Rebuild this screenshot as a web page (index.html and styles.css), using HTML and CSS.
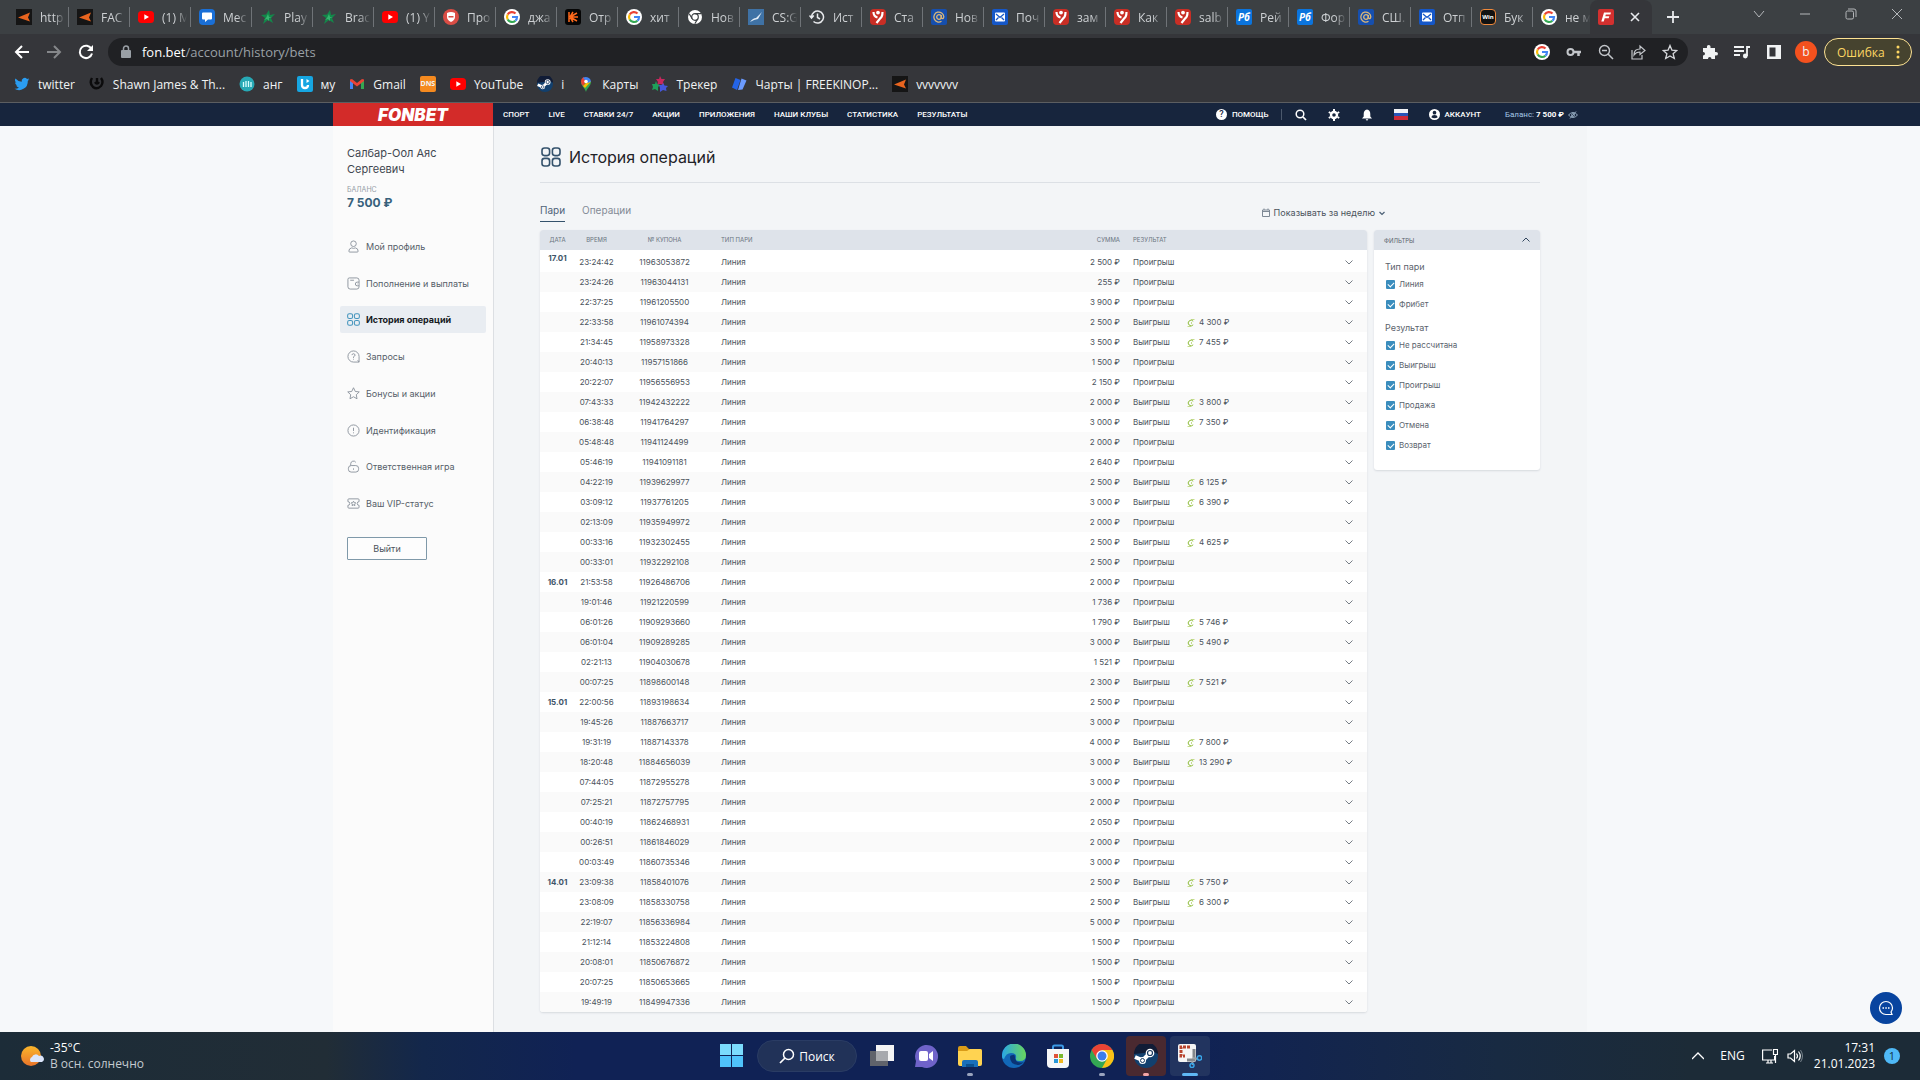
FILE: index.html
```html
<!DOCTYPE html>
<html lang="ru">
<head>
    <meta charset="UTF-8">
    <meta name="viewport" content="width=device-width, initial-scale=1.0">
    <title>История операций</title>
    <link rel="stylesheet" href="styles.css">
</head>
<body>
    <!-- Общие иконки -->
    <svg class="sprite" aria-hidden="true">
        <symbol id="i-aimp" viewBox="0 0 16 16"><rect width="16" height="16" fill="#151515"/><path d="M2 8.500l12-5-2 5 2 4z" fill="#e8641f"/></symbol>
        <symbol id="i-youtube" viewBox="0 0 16 16"><rect y="2" width="16" height="12" rx="3.5" fill="#f00"/><path d="M6.3 5.3v5.4L11 8z" fill="#fff"/></symbol>
        <symbol id="i-message" viewBox="0 0 16 16"><rect width="16" height="16" rx="4" fill="#1a6fd6"/><path d="M3 4.500q0-1 1-1h8q1 0 1 1v5q0 1-1 1H9L6 13v-2.500H4q-1 0-1-1z" fill="#fff"/></symbol>
        <symbol id="i-star5" viewBox="0 0 16 16"><path d="M9 1l1 5 5-1-4 4 2 5-5-3-5 4 2-6-4-3 5-.5z" fill="#13874a"/><path d="M8 5l1 3 3 0-3 1 0 3-2-2-3 1 2-2z" fill="#35b56f"/></symbol>
        <symbol id="i-shield" viewBox="0 0 16 16"><circle cx="8" cy="8" r="8" fill="#da4d45"/><path d="M4 4q4-2 8 0v4q0 3-4 5-4-2-4-5z" fill="#fff"/><path d="M5.500 7h5v1.500h-5z" fill="#da4d45"/></symbol>
        <symbol id="i-google" viewBox="0 0 16 16"><circle cx="8" cy="8" r="8" fill="#fff"/><g fill="none" stroke-width="2.200"><path d="M11.500 4.500A5 5 0 0 0 3.700 5.500" stroke="#ea4335"/><path d="M3.700 5.500a5 5 0 0 0 0 5" stroke="#fbbc05"/><path d="M3.700 10.500a5 5 0 0 0 7.700 1.200" stroke="#34a853"/><path d="M8 8h5q0 2.500-1.600 3.700" stroke="#4285f4"/></g></symbol>
        <symbol id="i-kinopoisk" viewBox="0 0 16 16"><rect width="16" height="16" rx="3" fill="#050505"/><path d="M4 3v10M5 8l3-5M5 8l7-4M5 8h8M5 8l7 4M5 8l3 5" stroke="#ff6a1c" stroke-width="1.500"/></symbol>
        <symbol id="i-chromew" viewBox="0 0 16 16"><circle cx="8" cy="8" r="7" fill="#fff"/><circle cx="8" cy="8" r="3.300" fill="#fff" stroke="#3c4043" stroke-width="1.200"/><path d="M8 4.700h6M5.200 9.700l-3-5M10.800 9.700l-3 5" stroke="#3c4043" stroke-width="1.200"/></symbol>
        <symbol id="i-cs" viewBox="0 0 16 16"><rect width="16" height="16" fill="#3f72a5"/><path d="M2 13q3-4 6-4l6-6-4 7-4 1z" fill="#e2edf7"/></symbol>
        <symbol id="i-history" viewBox="0 0 16 16"><path d="M2.500 8a6 6 0 1 1 2 4.500M.500 6.500L2.500 9l2.300-2.500M8.500 4.500V8.500l2.500 1.500" fill="none" stroke="#e8eaed" stroke-width="1.500"/></symbol>
        <symbol id="i-y" viewBox="0 0 16 16"><rect width="16" height="16" rx="4" fill="#c92e25"/><circle cx="8" cy="3.600" r="1.900" fill="#fff"/><path d="M3.500 3q0 4.500 4 5.500M12.500 3q0 5-2.500 6.500L6.500 14" fill="none" stroke="#fff" stroke-width="2.200"/></symbol>
        <symbol id="i-at" viewBox="0 0 16 16"><rect width="16" height="16" rx="2" fill="#164fae"/><circle cx="8" cy="8" r="2.300" fill="none" stroke="#dcb878" stroke-width="1.300"/><path d="M10.300 6v3q2.500 1.500 2.500-1.500A5 5 0 1 0 10.500 12.300" fill="none" stroke="#dcb878" stroke-width="1.300"/></symbol>
        <symbol id="i-mail" viewBox="0 0 16 16"><rect width="16" height="16" rx="2" fill="#1557c8"/><rect x="3" y="3.500" width="10" height="9" rx="1" fill="#fff"/><path d="M4 5l4 3.500L12 5M4 11l2.500-2.500M12 11L9.500 8.500" fill="none" stroke="#1557c8" stroke-width="1.300"/></symbol>
        <symbol id="i-twitter" viewBox="0 0 24 24"><path d="M23 5c-.800.400-1.700.600-2.600.800.900-.600 1.600-1.500 2-2.500-.900.500-1.900.900-2.900 1.100a4.600 4.600 0 0 0-7.900 4.200A13 13 0 0 1 2.200 3.800a4.600 4.600 0 0 0 1.400 6.100c-.700 0-1.400-.200-2-.600 0 2.300 1.600 4.200 3.700 4.600-.700.200-1.400.200-2.100.100.600 1.800 2.300 3.100 4.300 3.200A9.200 9.200 0 0 1 .700 19 13 13 0 0 0 20.700 7.400C21.600 6.800 22.400 5.900 23 5z" fill="#2a9df1"/></symbol>
        <symbol id="i-mp" viewBox="0 0 16 16"><path d="M3 2q-3 5 1 9 4 3 8-1 3-4 0-8M8 2v6M6 6q2 3 4 0" fill="none" stroke="#0b0b0c" stroke-width="2.400"/></symbol>
        <symbol id="i-ang" viewBox="0 0 16 16"><circle cx="8" cy="8" r="7.500" fill="#27a9b5"/><path d="M4.500 11V6M7 11V5M9.500 11V5M12 11V6" stroke="#d9ffff" stroke-width="1.300"/></symbol>
        <symbol id="i-my" viewBox="0 0 16 16"><rect width="16" height="16" rx="2" fill="#16a6e2"/><path d="M5 3v6q0 3 3 3t3-3" fill="none" stroke="#fff" stroke-width="2.300"/><path d="M9.500 3l3 2-3 2z" fill="#fff"/></symbol>
        <symbol id="i-gmail" viewBox="0 0 16 16"><path d="M1 4v9h3V6z" fill="#4285f4"/><path d="M15 4v9h-3V6z" fill="#34a853"/><path d="M1 3.500L3 3l5 4 5-4 2 .500V5L8 10.500 1 5z" fill="#ea4335"/></symbol>
        <symbol id="i-steam" viewBox="0 0 24 24"><circle cx="12" cy="12" r="12" fill="#12406e"/><path d="M0 10A12 12 0 0 1 24 10L20 8z" fill="#111c36"/><path d="M1 13l7 3" stroke="#fff" stroke-width="4"/><circle cx="8.500" cy="16.500" r="3.500" fill="#fff"/><path d="M9 16l6-6" stroke="#fff" stroke-width="4"/><circle cx="16" cy="9" r="4.300" fill="#fff"/><circle cx="16" cy="9" r="2.500" fill="#fff" stroke="#17385f" stroke-width="1.200"/><circle cx="8.500" cy="16.500" r="2" fill="none" stroke="#17385f"/></symbol>
        <symbol id="i-maps" viewBox="0 0 16 16"><path d="M8 16C7 12 3 10 3 5.500L8 6l5-.500C13 10 9 12 8 16z" fill="#34a853"/><path d="M3 5.500A5 5 0 0 1 6 1l2 5-3 4q-2-2-2-4.500z" fill="#ea4335"/><path d="M5 10l5-5 3 .500-6 6.500z" fill="#fbbc04"/><path d="M5 2a5 5 0 0 1 8 3.500L10 7z" fill="#4285f4"/><circle cx="8" cy="5.500" r="1.800" fill="#fff"/></symbol>
        <symbol id="i-tracker" viewBox="0 0 16 16"><path d="M8 0l1.500 3L13 3l-2 3 1 3-4-1-3 1 1-3-2-3 3 0z" fill="#c6285d"/><path d="M4 5l1 3 3 1-2 2 0 4-3-2-3 1 1-3-1-3 3 0z" fill="#1fa05a"/><path d="M11 7l1.500 2.500L16 10l-2 2 .5 3-3.500-1-3 2 0-4-1-3 3 0z" fill="#4557dc"/></symbol>
        <symbol id="i-charts" viewBox="0 0 16 16"><path d="M4.500 2l5 2-3.500 10-5-2.500z" fill="#2464e8"/><path d="M10.500 2.500l5 2-4 9-4.500.5z" fill="#6b9bff"/></symbol>
        <symbol id="i-grid" viewBox="0 0 20 20"><g fill="none" stroke="currentColor" stroke-width="1.600"><rect x="1" y="1" width="7.600" height="7.600" rx="2.500"/><rect x="11.400" y="1" width="7.600" height="7.600" rx="2.500"/><rect x="1" y="11.400" width="7.600" height="7.600" rx="2.500"/><rect x="11.400" y="11.400" width="7.600" height="7.600" rx="2.500"/></g></symbol>
        <symbol id="i-down" viewBox="0 0 8 8"><path d="M.500 2.500L4 6l3.500-3.500" fill="none" stroke="currentColor"/></symbol>
        <symbol id="i-cashout" viewBox="0 0 8 8"><path d="M6.200 2.200A2.800 2.800 0 1 0 6.200 5.800" fill="none" stroke="#8fbd3a"/><path d="M4 .500h3.500M.500 7.500H4M4.500 3v2" fill="none" stroke="#b4d36f" stroke-width=".8"/></symbol>
    </svg>

    <!-- Окно браузера -->
    <div class="browser">
        <div class="tab-strip">
            <div class="tabs" id="tabs"></div>
            <div class="tab-active">
                <svg class="icon16" viewBox="0 0 16 16"><rect width="16" height="16" rx="2" fill="#d3302f"/><path d="M6 3.500h7l-.600 2H7.800L7.300 7.200h4l-.600 2h-4L5.700 12.500H3.300z" fill="#fff"/></svg>
                <button class="plain" aria-label="Закрыть вкладку"><svg width="10" height="10" viewBox="0 0 10 10"><path d="M1 1l8 8M9 1L1 9" stroke="#e8eaed" stroke-width="1.600"/></svg></button>
            </div>
            <button class="plain new-tab" aria-label="Новая вкладка"><svg width="14" height="14" viewBox="0 0 14 14"><path d="M7 1v12M1 7h12" stroke="#e8eaed" stroke-width="1.800"/></svg></button>
            <div class="window-controls">
                <button class="plain" aria-label="Поиск вкладок"><svg width="12" height="12" viewBox="0 0 12 12"><path d="M1 3l5 6 5-6"/></svg></button>
                <button class="plain" aria-label="Свернуть"><svg width="12" height="12" viewBox="0 0 12 12"><path d="M1 6h10"/></svg></button>
                <button class="plain" aria-label="Развернуть"><svg width="12" height="12" viewBox="0 0 12 12"><rect x="1" y="3" width="7.500" height="8" rx="1.500"/><path d="M3 1h6q2 0 2 2v6"/></svg></button>
                <button class="plain" aria-label="Закрыть"><svg width="12" height="12" viewBox="0 0 12 12"><path d="M1 1l10 10M11 1L1 11"/></svg></button>
            </div>
        </div>

        <div class="toolbar">
            <button class="tool" aria-label="Назад"><svg width="16" height="16" viewBox="0 0 16 16"><path d="M15 8H2M8 2L2 8l6 6" fill="none" stroke="#fff" stroke-width="2"/></svg></button>
            <button class="tool" aria-label="Вперёд"><svg width="16" height="16" viewBox="0 0 16 16"><path d="M1 8h13M8 2l6 6-6 6" fill="none" stroke="#85878a" stroke-width="2"/></svg></button>
            <button class="tool" aria-label="Обновить"><svg width="16" height="16" viewBox="0 0 16 16"><path d="M13.500 5A6.200 6.200 0 1 0 14 9.500" fill="none" stroke="#fff" stroke-width="2"/><path d="M15 1v6H9z" fill="#fff"/></svg></button>
            <div class="omnibox">
                <svg width="10" height="14" viewBox="0 0 10 14"><rect y="5" width="10" height="8" rx="1" fill="#9aa0a6"/><path d="M2.500 5V3.500a2.500 2.500 0 0 1 5 0V5" fill="none" stroke="#9aa0a6" stroke-width="1.500"/></svg>
                <a class="url" href="#"><span>fon.bet</span>/account/history/bets</a>
                <div class="omnibox-icons">
                    <svg class="icon16"><use href="#i-google"/></svg>
                    <svg class="icon16" viewBox="0 0 16 16"><circle cx="4.500" cy="8" r="3" fill="none" stroke="#c3c6ca" stroke-width="2"/><path d="M7 8h8M12.500 8v4" stroke="#c3c6ca" stroke-width="2.500"/></svg>
                    <svg class="icon16" viewBox="0 0 16 16"><path d="M10 10l5 5M4 6.500h5" stroke="#c3c6ca" stroke-width="1.500"/><circle cx="6.500" cy="6.500" r="5" fill="none" stroke="#c3c6ca" stroke-width="1.400"/></svg>
                    <svg class="icon16" viewBox="0 0 16 16"><path d="M2 6v9h10v-4M4 11q0-6 6-6V2l5 4.500-5 4V8q-4 0-6 3z" fill="none" stroke="#c3c6ca" stroke-width="1.200"/></svg>
                    <svg class="icon16" viewBox="0 0 16 16"><path d="M8 1.500l1.900 4.600 4.900.400-3.700 3.200 1.200 4.800L8 11.900l-4.300 2.600 1.200-4.800L1.200 6.500l4.900-.400z" fill="none" stroke="#d5d7da" stroke-width="1.300"/></svg>
                </div>
            </div>
            <div class="extensions">
                <svg class="icon16" viewBox="0 0 16 16"><path d="M1 4h4q-.500-3 1.700-3T8.500 4H13v4q3-.500 3 1.700t-3 1.800V15H9.500q0-2-1.800-2T6 15H1v-3.500q2 0 2-1.800T1 8z" fill="#f1f3f4"/></svg>
                <svg class="icon16" viewBox="0 0 16 16"><path d="M0 3h10M0 7h10M0 11h6M13 12V3h3" fill="none" stroke="#f1f3f4" stroke-width="1.800"/><circle cx="11.300" cy="12" r="2.400" fill="#f1f3f4"/></svg>
                <svg class="icon16" viewBox="0 0 16 16"><rect x="1" y="1" width="14" height="14" fill="#f1f3f4"/><rect x="3.500" y="3.500" width="6" height="9" fill="#35363a"/></svg>
            </div>
            <span class="avatar">b</span>
            <button class="error-button">Ошибка <svg width="4" height="14" viewBox="0 0 4 14"><g fill="#fdd663"><circle cx="2" cy="2" r="1.500"/><circle cx="2" cy="7" r="1.500"/><circle cx="2" cy="12" r="1.500"/></g></svg></button>
        </div>

        <div class="bookmarks">
            <a href="#"><svg class="icon16"><use href="#i-twitter"/></svg>twitter</a>
            <a href="#"><svg class="icon16"><use href="#i-mp"/></svg>Shawn James &amp; Th...</a>
            <a href="#"><svg class="icon16"><use href="#i-ang"/></svg>анг</a>
            <a href="#"><svg class="icon16"><use href="#i-my"/></svg>му</a>
            <a href="#"><svg class="icon16"><use href="#i-gmail"/></svg>Gmail</a>
            <a href="#"><span class="dns">DNS</span></a>
            <a href="#"><svg class="icon16"><use href="#i-youtube"/></svg>YouTube</a>
            <a href="#"><svg class="icon16"><use href="#i-steam"/></svg>i</a>
            <a href="#"><svg class="icon16"><use href="#i-maps"/></svg>Карты</a>
            <a href="#"><svg class="icon16"><use href="#i-tracker"/></svg>Трекер</a>
            <a href="#"><svg class="icon16"><use href="#i-charts"/></svg>Чарты | FREEKINOP...</a>
            <a href="#"><svg class="icon16"><use href="#i-aimp"/></svg>vvvvvvv</a>
        </div>
    </div>

    <!-- Шапка сайта -->
    <header class="site-header">
        <div class="container header-inner">
            <a class="logo" href="#">FONBET</a>
            <nav class="main-nav">
                <a href="#">СПОРТ</a>
                <a href="#">LIVE</a>
                <a href="#">СТАВКИ 24/7</a>
                <a href="#">АКЦИИ</a>
                <a href="#">ПРИЛОЖЕНИЯ</a>
                <a href="#">НАШИ КЛУБЫ</a>
                <a href="#">СТАТИСТИКА</a>
                <a href="#">РЕЗУЛЬТАТЫ</a>
            </nav>
            <div class="header-tools">
                <a class="help" href="#"><span class="help-mark">?</span>ПОМОЩЬ</a>
                <button class="plain" aria-label="Поиск"><svg width="12" height="12" viewBox="0 0 12 12"><circle cx="5" cy="5" r="3.800" fill="none" stroke="#fff" stroke-width="1.500"/><path d="M8 8l3 3" stroke="#fff" stroke-width="1.700"/></svg></button>
                <button class="plain" aria-label="Настройки"><svg width="12" height="12" viewBox="0 0 12 12"><circle cx="6" cy="6" r="3" fill="none" stroke="#fff" stroke-width="2.400"/><path d="M6 0v2M6 10v2M.800 3l1.700 1M9.500 8l1.700 1M.800 9l1.700-1M9.500 4l1.700-1" stroke="#fff" stroke-width="2"/></svg></button>
                <button class="plain" aria-label="Уведомления"><svg width="12" height="12" viewBox="0 0 12 12"><path d="M6 .500q3.300.500 3.300 4.500v2.500L11 9.500H1l1.700-2V5Q2.700 1 6 .500zM4.700 10.200h2.600Q7 11.500 6 11.500t-1.300-1.300z" fill="#fff"/></svg></button>
                <span class="flag"></span>
                <a class="account" href="#"><svg width="11" height="11" viewBox="0 0 12 12"><circle cx="6" cy="6" r="6" fill="#fff"/><circle cx="6" cy="4" r="2" fill="#17253d"/><path d="M2.500 9q.500-2.500 3.500-2.500T9.500 9Q6 11 2.500 9z" fill="#17253d"/></svg>АККАУНТ</a>
                <span class="header-balance">Баланс: <b>7 500 ₽</b></span>
                <svg width="10" height="8" viewBox="0 0 10 8"><path d="M.500 4Q5-1 9.500 4 5 9 .500 4zM2 7.500L8 .500" fill="none" stroke="#9fb6cc" stroke-width=".9"/><circle cx="5" cy="4" r="1.500" fill="none" stroke="#9fb6cc" stroke-width=".8"/></svg>
            </div>
        </div>
    </header>

    <div class="page">
        <div class="container page-inner">
            <aside class="sidebar">
                <div class="user-name">Салбар-Оол Аяс Сергеевич</div>
                <div class="balance-label">БАЛАНС</div>
                <div class="balance">7 500 ₽</div>
                <nav class="menu">
                    <a href="#"><svg viewBox="0 0 14 14"><circle cx="7" cy="4" r="3"/><path d="M2 12q0-3 3-3.500 2 1 4 0 3 .500 3 3.500 0 1-1 1H3q-1 0-1-1z"/></svg>Мой профиль</a>
                    <a href="#"><svg viewBox="0 0 14 14"><path d="M2.500 1h8Q13 1 13 3.500v7q0 2.500-2.500 2.500h-7Q1 13 1 10.500v-8Q1 1 2.500 1zM3.500 3.500h4M13 5.500h-2a2 2 0 0 0 0 4h2"/><path d="M11 7.500h.5"/></svg>Пополнение и выплаты</a>
                    <a class="active" href="#"><svg viewBox="0 0 20 20"><use href="#i-grid"/></svg>История операций</a>
                    <a href="#"><svg viewBox="0 0 14 14"><path d="M13 13H7a6 6 0 1 1 6-6zM13 13l-1.500-2"/><path d="M5.300 5.500Q5.500 4 7 4t1.700 1.500Q8.700 6.500 7 7.300V8.500M7 9.500v.8"/></svg>Запросы</a>
                    <a href="#"><svg viewBox="0 0 14 14"><path d="M7 .800l1.900 4 4.300.500-3.200 3 .800 4.400L7 10.500l-3.800 2.200.800-4.400-3.200-3 4.300-.5z"/></svg>Бонусы и акции</a>
                    <a href="#"><svg viewBox="0 0 14 14"><circle cx="7" cy="7" r="6"/><path d="M7 4v3.500M7 9v1"/></svg>Идентификация</a>
                    <a href="#"><svg viewBox="0 0 14 14"><rect x="1.500" y="6" width="11" height="7" rx="3"/><path d="M4 6V4a3 3 0 0 1 5.500-1.500M7 9v1.5"/></svg>Ответственная игра</a>
                    <a href="#"><svg viewBox="0 0 14 14"><path d="M2 2h10q1 0 1 1v2a2 2 0 0 0 0 4v2q0 1-1 1H2q-1 0-1-1V9a2 2 0 0 0 0-4V3q0-1 1-1z"/><path d="M7 4.500l.800 1.600 1.700.200-1.300 1.200.300 1.800L7 8.500l-1.500.800.300-1.800-1.300-1.200 1.700-.200z"/></svg>Ваш VIP-статус</a>
                </nav>
                <button class="logout">Выйти</button>
            </aside>

            <main class="content">
                <h1><svg width="20" height="20"><use href="#i-grid"/></svg>История операций</h1>
                <div class="history-bar">
                    <nav class="history-tabs">
                        <a class="current" href="#">Пари</a>
                        <a href="#">Операции</a>
                    </nav>
                    <button class="period"><svg width="8" height="9" viewBox="0 0 8 9"><path d="M.500 2h7v6.500h-7zM2 .500V2M6 .500V2M.500 3.500h7" fill="none" stroke="#7d8894"/></svg>Показывать за неделю<svg width="6" height="6" viewBox="0 0 6 6"><path d="M.500 2L3 4.500 5.500 2" fill="none" stroke="#4b5f75" stroke-width="1.200"/></svg></button>
                </div>

                <div class="columns">
                    <table class="bets">
                        <colgroup>
                            <col class="c-date"><col class="c-time"><col class="c-coupon"><col class="c-type">
                            <col class="c-sum"><col class="c-result"><col class="c-win"><col class="c-more">
                        </colgroup>
                        <thead>
                            <tr>
                                <th>ДАТА</th>
                                <th>ВРЕМЯ</th>
                                <th>№ КУПОНА</th>
                                <th class="left">ТИП ПАРИ</th>
                                <th class="right">СУММА</th>
                                <th class="left result" colspan="3">РЕЗУЛЬТАТ</th>
                            </tr>
                        </thead>
                        <tbody id="betsTable"></tbody>
                    </table>

                    <form class="filters">
                        <button type="button" class="filters-head">ФИЛЬТРЫ<svg width="8" height="8" viewBox="0 0 8 8"><path d="M.500 5.500L4 2l3.500 3.500" fill="none" stroke="#33475e"/></svg></button>
                        <div class="filters-body">
                            <fieldset>
                                <legend>Тип пари</legend>
                                <label><input type="checkbox" checked>Линия</label>
                                <label><input type="checkbox" checked>Фрибет</label>
                            </fieldset>
                            <fieldset>
                                <legend>Результат</legend>
                                <label><input type="checkbox" checked>Не рассчитана</label>
                                <label><input type="checkbox" checked>Выигрыш</label>
                                <label><input type="checkbox" checked>Проигрыш</label>
                                <label><input type="checkbox" checked>Продажа</label>
                                <label><input type="checkbox" checked>Отмена</label>
                                <label><input type="checkbox" checked>Возврат</label>
                            </fieldset>
                        </div>
                    </form>
                </div>
            </main>
        </div>
        <button class="chat" aria-label="Чат"><svg width="16" height="16" viewBox="0 0 16 16"><path d="M14 14.500H8A6.500 6.500 0 1 1 14.500 8q0 2-1.500 4z" fill="none" stroke="#fff" stroke-width="1.200"/><path d="M4.500 8h1.500M7.300 8h1.500M10 8h1.500" stroke="#fff" stroke-width="1.300"/></svg></button>
    </div>

    <!-- Панель задач -->
    <footer class="taskbar">
        <div class="weather">
            <svg width="24" height="24" viewBox="0 0 24 24"><defs><linearGradient id="sun" x2="0" y2="1"><stop stop-color="#fbb62b"/><stop offset="1" stop-color="#e8742a"/></linearGradient></defs><circle cx="11" cy="12" r="10" fill="url(#sun)"/><path d="M11 18a3 3 0 0 1 1-5 4 4 0 0 1 7-1 3 3 0 0 1 3 6z" fill="#dce6fb"/></svg>
            <div>-35°C<br><span>В осн. солнечно</span></div>
        </div>
        <div class="apps">
            <button class="app" aria-label="Пуск"><svg width="24" height="24" viewBox="0 0 24 24"><g fill="#4fc3fb"><path d="M0 0h11v11H0zM12 0h11v11H12z" fill="#7bdbfd"/><path d="M0 12h11v11H0zM12 12h11v11H12z"/></g></svg></button>
            <button class="search"><svg width="16" height="16" viewBox="0 0 16 16"><circle cx="9.500" cy="6.500" r="5" fill="none" stroke="#fff" stroke-width="1.500"/><path d="M6 10l-5 5" stroke="#fff" stroke-width="1.700"/></svg>Поиск</button>
            <button class="app" aria-label="Представление задач"><svg width="24" height="24" viewBox="0 0 24 24"><rect x="6" y="1" width="18" height="16" fill="#f4f4f4"/><rect y="7" width="18" height="15" fill="#60636b"/><rect x="6" y="7" width="12" height="10" fill="#a7a9ad"/></svg></button>
            <button class="app" aria-label="Чат Teams"><svg width="24" height="24" viewBox="0 0 24 24"><path d="M1 23l1-6A11.500 11.500 0 1 1 8 23z" fill="#6f63c9"/><rect x="5" y="7" width="9" height="10" rx="2" fill="#fff"/><path d="M15 10l4-3v10l-4-3z" fill="#fff"/></svg></button>
            <button class="app running" aria-label="Проводник"><svg width="24" height="24" viewBox="0 0 24 24"><path d="M0 4q0-2 2-2h6l3 3h11q2 0 2 2v5H0z" fill="#d99b18"/><path d="M0 7h9l3-2h10q2 0 2 2v13q0 2-2 2H2q-2 0-2-2z" fill="#ffd351"/><path d="M4 23v-5q0-2 2-2h12q2 0 2 2v5z" fill="#1a6fba"/><path d="M8 20h8v3H8z" fill="#0c508e"/></svg></button>
            <button class="app" aria-label="Edge"><svg width="24" height="24" viewBox="0 0 24 24"><defs><linearGradient id="edge"><stop stop-color="#2aa7e6"/><stop offset="1" stop-color="#69d65c"/></linearGradient></defs><circle cx="12" cy="12" r="12" fill="#1268b8"/><path d="M0 12A12 12 0 0 1 24 11q0 6-6 6-5 0-4-3 1-5-5-5-5 0-7 6-2 0-2-3z" fill="url(#edge)"/><path d="M8 13q0 8 9 8 3-1 5-3-8 2-9-4 0-4-2-3-3 0-3 2z" fill="#0a3475"/></svg></button>
            <button class="app" aria-label="Microsoft Store"><svg width="24" height="24" viewBox="0 0 24 24"><path d="M7 6V3q0-1.500 1.500-1.500h7Q17 1.500 17 3v3" fill="none" stroke="#3d9ae6" stroke-width="2"/><path d="M1 5h22v15q0 4-4 4H5q-4 0-4-4z" fill="#f6f7f9"/><path d="M8 10h4v4H8z" fill="#e0523a"/><path d="M13 10h4v4h-4z" fill="#79b82e"/><path d="M8 15h4v4H8z" fill="#2997d8"/><path d="M13 15h4v4h-4z" fill="#f2b81f"/></svg></button>
            <button class="app running" aria-label="Chrome"><svg width="24" height="24" viewBox="0 0 24 24"><circle cx="12" cy="12" r="12" fill="#34a853"/><path d="M1.600 6A12 12 0 0 1 22.400 6H12L7 15z" fill="#ea4335"/><path d="M22.400 6A12 12 0 0 1 12 24l5-9-5-9z" fill="#fbc116"/><circle cx="12" cy="12" r="5.800" fill="#fff"/><circle cx="12" cy="12" r="4.500" fill="#3b7ded"/></svg></button>
            <button class="app running alert" aria-label="Steam"><svg width="24" height="24"><use href="#i-steam"/></svg></button>
            <button class="app running selected" aria-label="Ножницы"><svg width="24" height="24" viewBox="0 0 24 24"><rect width="18" height="18" rx="2" fill="#f5f5f5"/><path d="M12 3H3v9h4" fill="none" stroke="#b8442e" stroke-width="3" stroke-dasharray="3 1"/><path d="M9 16h7V5" fill="none" stroke="#85888c" stroke-width="3"/><path d="M15 14l5 1M14 17l1 4" stroke="#9ba0a5" stroke-width="2"/><circle cx="21.500" cy="14" r="2.200" fill="none" stroke="#38a5e8" stroke-width="1.500"/><circle cx="14" cy="21.500" r="2" fill="none" stroke="#38a5e8" stroke-width="1.500"/></svg></button>
        </div>
        <div class="tray">
            <svg width="12" height="8" viewBox="0 0 12 8"><path d="M0 7l6-6 6 6" fill="none" stroke="#fff" stroke-width="1.300"/></svg>
            <span class="lang">ENG</span>
            <svg class="icon16" viewBox="0 0 16 16"><path d="M10 2H.600v10h12V8M4 15h7M6 12v3M9 12v3M11.500 1.500h4v5h-4zM13.500 6.500V15" fill="none" stroke="#fff" stroke-width="1.200"/></svg>
            <svg class="icon16" viewBox="0 0 16 16"><path d="M1 6h2.500L7.500 2.500v11L3.500 10H1zM9.500 5.500q2 2.500 0 5M11.500 3.500q3.500 4.500 0 9" fill="none" stroke="#fff" stroke-width="1.200"/><path d="M13.500 2q4 6 0 12" fill="none" stroke="#78848d"/></svg>
            <div class="clock">17:31<br>21.01.2023</div>
            <span class="notify">1</span>
        </div>
    </footer>

    <script>
        // Вкладки браузера: иконка и подпись
        const tabs = [
            ['aimp', 'http'], ['aimp', 'FAC'], ['youtube', '(1) М'], ['message', 'Мес'],
            ['star5', 'Play'], ['star5', 'Brac'], ['youtube', '(1) Y'], ['shield', 'Про'],
            ['google', 'джа'], ['kinopoisk', 'Отр'], ['google', 'хит'], ['chromew', 'Нов'],
            ['cs', 'CS:G'], ['history', 'Ист'], ['y', 'Ста'], ['at', 'Нов'],
            ['mail', 'Поч'], ['y', 'зам'], ['y', 'Как'], ['y', 'salb'],
            ['rb', 'Рей'], ['rb', 'Фор'], ['at', 'СШ.'], ['mail', 'Отп'],
            ['win', 'Бук'], ['google', 'не м']
        ];
        const textIcons = { rb: 'Рб', win: 'Win' };

        document.getElementById('tabs').innerHTML = tabs.map(([icon, title]) => `
            <div class="tab">
                ${textIcons[icon]
                    ? `<span class="text-icon ${icon}">${textIcons[icon]}</span>`
                    : `<svg class="icon16"><use href="#i-${icon}"/></svg>`}
                <span class="tab-title">${title}</span>
            </div>
        `).join('');

        // Дата, время, купон, сумма, выплата (если выигрыш)
        const bets = [
            ['17.01', '23:24:42', '11963053872', '2 500'],
            ['', '23:24:26', '11963044131', '255'],
            ['', '22:37:25', '11961205500', '3 900'],
            ['', '22:33:58', '11961074394', '2 500', '4 300'],
            ['', '21:34:45', '11958973328', '3 500', '7 455'],
            ['', '20:40:13', '11957151866', '1 500'],
            ['', '20:22:07', '11956556953', '2 150'],
            ['', '07:43:33', '11942432222', '2 000', '3 800'],
            ['', '06:38:48', '11941764297', '3 000', '7 350'],
            ['', '05:48:48', '11941124499', '2 000'],
            ['', '05:46:19', '11941091181', '2 640'],
            ['', '04:22:19', '11939629977', '2 500', '6 125'],
            ['', '03:09:12', '11937761205', '3 000', '6 390'],
            ['', '02:13:09', '11935949972', '2 000'],
            ['', '00:33:16', '11932302455', '2 500', '4 625'],
            ['', '00:33:01', '11932292108', '2 500'],
            ['16.01', '21:53:58', '11926486706', '2 000'],
            ['', '19:01:46', '11921220599', '1 736'],
            ['', '06:01:26', '11909293660', '1 790', '5 746'],
            ['', '06:01:04', '11909289285', '3 000', '5 490'],
            ['', '02:21:13', '11904030678', '1 521'],
            ['', '00:07:25', '11898600148', '2 300', '7 521'],
            ['15.01', '22:00:56', '11893198634', '2 500'],
            ['', '19:45:26', '11887663717', '3 000'],
            ['', '19:31:19', '11887143378', '4 000', '7 800'],
            ['', '18:20:48', '11884656039', '3 000', '13 290'],
            ['', '07:44:05', '11872955278', '3 000'],
            ['', '07:25:21', '11872757795', '2 000'],
            ['', '00:40:19', '11862468931', '2 050'],
            ['', '00:26:51', '11861846029', '2 000'],
            ['', '00:03:49', '11860735346', '3 000'],
            ['14.01', '23:09:38', '11858401076', '2 500', '5 750'],
            ['', '23:08:09', '11858330758', '2 500', '6 300'],
            ['', '22:19:07', '11856336984', '5 000'],
            ['', '21:12:14', '11853224808', '1 500'],
            ['', '20:08:01', '11850676872', '1 500'],
            ['', '20:07:25', '11850653665', '1 500'],
            ['', '19:49:19', '11849947336', '1 500']
        ];

        document.getElementById('betsTable').innerHTML = bets.map(([date, time, coupon, sum, win]) => `
            <tr>
                <td class="date">${date}</td>
                <td>${time}</td>
                <td>${coupon}</td>
                <td class="left">Линия</td>
                <td class="right">${sum} ₽</td>
                <td class="left result">${win ? 'Выигрыш' : 'Проигрыш'}</td>
                <td class="left">${win ? `<svg class="cashout"><use href="#i-cashout"/></svg>${win} ₽` : ''}</td>
                <td><button class="plain more" aria-label="Подробнее"><svg width="8" height="8"><use href="#i-down"/></svg></button></td>
            </tr>
        `).join('');
    </script>
</body>
</html>
```

FILE: styles.css
```css
* {
    box-sizing: border-box;
}

body {
    margin: 0;
    min-height: 100vh;
    display: flex;
    flex-direction: column;
    background: #f6f8fa;
    font-family: Inter, "Noto Sans", sans-serif;
    color: #4b535c;
}

a {
    color: inherit;
    text-decoration: none;
}

button {
    font-family: inherit;
    color: inherit;
    cursor: pointer;
}

svg {
    flex-shrink: 0;
}

.sprite {
    position: absolute;
    width: 0;
    height: 0;
}

.plain {
    display: flex;
    align-items: center;
    justify-content: center;
    padding: 0;
    border: none;
    background: none;
}

.icon16 {
    width: 16px;
    height: 16px;
}

/* Браузер */
.browser {
    background: #35363a;
    border-bottom: 1px solid #5c5e61;
    font-family: "Open Sans", "Noto Sans", sans-serif;
    font-size: 12px;
    color: #f1f3f4;
}

.tab-strip {
    display: flex;
    align-items: center;
    height: 34px;
    padding-left: 8px;
    background: #3c4043;
}

.tabs {
    display: flex;
}

.tab {
    display: flex;
    align-items: center;
    gap: 8px;
    width: 61px;
    height: 20px;
    padding: 0 0 0 8px;
    border-right: 1px solid #6f7377;
    color: #cdd0d3;
}

.tab:last-child {
    border-right-color: transparent;
}

.tab-title {
    flex: 1;
    overflow: hidden;
    white-space: nowrap;
    -webkit-mask-image: linear-gradient(90deg, #000 50%, transparent 90%);
    mask-image: linear-gradient(90deg, #000 50%, transparent 90%);
}

.text-icon {
    width: 16px;
    height: 16px;
    flex-shrink: 0;
    border-radius: 2px;
    text-align: center;
    line-height: 16px;
    font-weight: 700;
    color: #fff;
}

.rb {
    background: #0b74dd;
    font-size: 10px;
    font-style: italic;
}

.win {
    background: #121212;
    border: 1px solid #f08a3c;
    border-radius: 4px;
    font-size: 6px;
    line-height: 14px;
}

.tab-active {
    display: flex;
    align-items: center;
    gap: 16px;
    align-self: stretch;
    width: 62px;
    padding-left: 8px;
    margin-left: -4px;
    border-radius: 8px 8px 0 0;
    background: #35363a;
}

.new-tab {
    margin-left: 14px;
}

.window-controls {
    display: flex;
    gap: 34px;
    margin-left: auto;
    padding: 0 17px 6px 0;
}

.window-controls svg {
    fill: none;
    stroke: #b4b7ba;
}

.toolbar {
    display: flex;
    align-items: center;
    padding: 4px 8px 4px 6px;
}

.tool {
    display: flex;
    align-items: center;
    justify-content: center;
    width: 32px;
    height: 28px;
    padding: 0;
    border: none;
    background: none;
}

.omnibox {
    flex: 1;
    display: flex;
    align-items: center;
    height: 28px;
    margin-left: 6px;
    padding: 0 10px 0 13px;
    border-radius: 14px;
    background: #202124;
}

.url {
    margin-left: 11px;
    font-size: 13px;
    color: #9aa0a6;
}

.url span {
    color: #fff;
}

.omnibox-icons {
    display: flex;
    gap: 16px;
    margin-left: auto;
}

.extensions {
    display: flex;
    gap: 16px;
    padding: 0 13px 0 14px;
}

.avatar {
    width: 22px;
    height: 22px;
    margin-right: 7px;
    border-radius: 50%;
    background: #f4511e;
    text-align: center;
    line-height: 21px;
}

.error-button {
    display: flex;
    align-items: center;
    justify-content: space-between;
    width: 88px;
    height: 28px;
    padding: 0 11px 0 12px;
    border: 1px solid #fde293;
    border-radius: 14px;
    background: #46432f;
    font-size: 12px;
    color: #fdd663;
}

.bookmarks {
    display: flex;
    align-items: center;
    gap: 14px;
    height: 32px;
    padding: 0 14px 4px;
}

.bookmarks a {
    display: flex;
    align-items: center;
    gap: 8px;
    white-space: nowrap;
}

.dns {
    width: 16px;
    height: 16px;
    border-radius: 2px;
    background: #f58a1f;
    font-size: 7px;
    font-weight: 700;
    line-height: 16px;
    text-align: center;
}

/* Шапка */
.container {
    width: 100%;
    max-width: 1254px;
    margin: 0 auto;
}

.site-header {
    background: #17253d;
    color: #fff;
    font-family: Roboto, "Noto Sans", sans-serif;
    font-size: 8px;
    font-weight: 500;
}

.header-inner {
    display: flex;
    align-items: center;
    height: 23px;
}

.logo {
    width: 160px;
    height: 23px;
    background: #d32b29;
    text-align: center;
    font-family: Inter, sans-serif;
    font-size: 17px;
    font-weight: 900;
    font-style: italic;
    line-height: 24px;
}

.main-nav {
    display: flex;
    gap: 19px;
    padding-left: 10px;
}

.header-tools {
    display: flex;
    align-items: center;
    gap: 21px;
    margin-left: auto;
    padding-right: 9px;
}

.help {
    display: flex;
    align-items: center;
    gap: 5px;
    padding-right: 12px;
    margin-right: -8px;
    border-right: 1px solid #4b586c;
}

.help-mark {
    width: 11px;
    height: 11px;
    border-radius: 50%;
    background: #fff;
    color: #17253d;
    font-size: 9px;
    line-height: 11px;
    text-align: center;
}

.flag {
    width: 14px;
    height: 11px;
    background: linear-gradient(#f2f4f7 33%, #2a55b8 33% 66%, #cf2b3a 66%);
}

.account {
    display: flex;
    align-items: center;
    gap: 5px;
}

.header-balance {
    margin: 0 -17px 0 3px;
    font-weight: 400;
    color: #a4c8e6;
}

.header-balance b {
    color: #fff;
}

/* Страница */
.page {
    position: relative;
    flex: 1;
    display: flex;
}

.page-inner {
    display: flex;
    background: #f3f5f7;
}

.sidebar {
    width: 161px;
    flex-shrink: 0;
    padding: 19px 7px 0;
    border-right: 1px solid #dcdfe3;
    background: #fbfbfb;
}

.user-name {
    padding: 0 30px 0 7px;
    font-size: 11px;
    line-height: 16px;
    color: #3f4750;
}

.balance-label {
    padding: 9px 7px 0;
    font-size: 7px;
    line-height: 8px;
    color: #959ca6;
}

.balance {
    padding: 1px 7px 0;
    font-size: 12px;
    font-weight: 700;
    line-height: 16px;
    color: #36617b;
}

.menu {
    display: flex;
    flex-direction: column;
    justify-content: space-between;
    height: 284px;
    margin-top: 22px;
}

.menu a {
    display: flex;
    align-items: center;
    gap: 6px;
    height: 27px;
    padding-left: 7px;
    border-radius: 2px;
    font-size: 9px;
    color: #565e69;
}

.menu svg {
    width: 13px;
    height: 13px;
    fill: none;
    stroke: #8b939d;
}

.menu .active {
    background: #e9edf2;
    font-weight: 700;
    color: #14181d;
}

.menu .active svg {
    color: #4595bd;
}

.logout {
    width: 80px;
    height: 23px;
    margin: 20px 7px 0;
    padding: 0;
    border: 1px solid #7f99a9;
    border-radius: 1px;
    background: #fdfdfd;
    font-size: 9px;
}

.content {
    flex: 1;
    padding: 19px 47px 20px 46px;
}

h1 {
    display: flex;
    align-items: center;
    gap: 8px;
    margin: 0 0 20px;
    padding: 0 0 13px 1px;
    border-bottom: 1px solid #dce0e5;
    font-size: 16px;
    font-weight: 400;
    line-height: 24px;
    color: #1f2227;
}

h1 svg {
    color: #34526c;
}

.history-bar {
    display: flex;
    justify-content: space-between;
    align-items: flex-start;
    height: 27px;
    padding-right: 155px;
    font-size: 10px;
    line-height: 14px;
}

.history-tabs {
    display: flex;
    gap: 17px;
    color: #838b96;
}

.history-tabs a {
    height: 19px;
}

.history-tabs .current {
    border-bottom: 1px solid #34526c;
    color: #4f6379;
}

.period {
    display: flex;
    align-items: center;
    gap: 4px;
    padding: 4px 0 0;
    border: none;
    background: none;
    font-size: 9px;
}

.columns {
    display: grid;
    grid-template-columns: 1fr 166px;
    align-items: start;
    gap: 7px;
}

.bets {
    width: 100%;
    table-layout: fixed;
    border-collapse: collapse;
    border-radius: 3px;
    overflow: hidden;
    background: #fff;
    box-shadow: 0 1px 2px #d5d9de;
    font-size: 8px;
    line-height: 10px;
    text-align: center;
}

.c-date { width: 35px; }
.c-time { width: 43px; }
.c-coupon { width: 93px; }
.c-sum { width: 90px; }
.c-result { width: 67px; }
.c-win { width: 144px; }
.c-more { width: 36px; }

.bets th,
.bets td {
    height: 20px;
    padding: 0;
}

.bets th {
    background: #dee3ea;
    font-size: 6px;
    font-weight: 400;
    color: #6a7480;
}

.bets .left {
    text-align: left;
}

.bets .right {
    text-align: right;
}

.bets .result {
    padding-left: 13px;
}

.bets .left:nth-child(4) {
    padding-left: 10px;
}

.bets tbody tr:nth-child(even) {
    background: #fafafa;
}

.bets tbody tr:first-child td {
    height: 22px;
    padding-top: 2px;
}

.bets .date {
    font-weight: 700;
    color: #3e5468;
}

.bets tbody tr:first-child .date {
    padding: 0 0 6px;
}

.cashout {
    width: 8px;
    height: 8px;
    margin-right: 4px;
    vertical-align: middle;
}

.more {
    margin: 0 auto;
    color: #777e86;
}

.filters {
    border-radius: 3px;
    overflow: hidden;
    background: #fff;
    box-shadow: 0 1px 2px #d5d9de;
    color: #5b636d;
}

.filters-head {
    display: flex;
    align-items: center;
    justify-content: space-between;
    width: 100%;
    height: 20px;
    padding: 0 10px;
    border: none;
    background: #dee3ea;
    font-size: 6px;
}

.filters-body {
    padding: 10px 11px 8px;
}

.filters fieldset {
    margin: 0 0 7px;
    padding: 0;
    border: none;
}

.filters legend {
    padding: 0;
    font-size: 9px;
    line-height: 14px;
}

.filters label {
    display: flex;
    align-items: center;
    gap: 4px;
    height: 20px;
    padding-left: 1px;
    font-size: 8px;
}

.filters input {
    position: relative;
    appearance: none;
    width: 9px;
    height: 9px;
    margin: 0;
    border-radius: 1px;
    background: #3a8dbd;
}

.filters input:checked::after {
    content: "";
    position: absolute;
    left: 3px;
    top: 1px;
    width: 3px;
    height: 5px;
    border: solid #fff;
    border-width: 0 1px 1px 0;
    transform: rotate(45deg);
}

.chat {
    position: absolute;
    right: 18px;
    bottom: 8px;
    display: flex;
    align-items: center;
    justify-content: center;
    width: 32px;
    height: 32px;
    padding: 0;
    border: none;
    border-radius: 50%;
    background: #08449f;
}

/* Панель задач */
.taskbar {
    display: grid;
    grid-template-columns: 1fr auto 1fr;
    align-items: center;
    height: 48px;
    padding-left: 2px;
    background: linear-gradient(90deg, #1c2c38 0%, #212d36 17%, #13274b 22%, #102255 30%, #102255 62%, #182a42 78%, #1c2b37 88%);
    font-family: "Open Sans", "Noto Sans", sans-serif;
    font-size: 12px;
    line-height: 16px;
    color: #fff;
}

.weather {
    display: flex;
    align-items: center;
    gap: 6px;
    padding-left: 18px;
}

.weather span {
    color: #c4cacf;
}

.apps {
    display: flex;
    align-items: center;
    gap: 4px;
}

.app {
    position: relative;
    display: flex;
    align-items: center;
    justify-content: center;
    width: 40px;
    height: 40px;
    padding: 0;
    border: none;
    border-radius: 4px;
    background: none;
}

.search {
    display: flex;
    align-items: center;
    justify-content: center;
    gap: 4px;
    width: 100px;
    height: 32px;
    margin: 0 1px;
    padding: 0;
    border: 1px solid #2a3c64;
    border-radius: 16px;
    background: #213258;
    font-size: 12px;
}

.running::after {
    content: "";
    position: absolute;
    left: 17px;
    bottom: 0;
    width: 6px;
    height: 3px;
    border-radius: 2px;
    background: #9aa4be;
}

.alert {
    background: #4a2930;
}

.alert::after {
    background: #f5a5a5;
}

.selected {
    background: #22345f;
}

.selected::after {
    left: 12px;
    width: 16px;
    background: #5fb8f5;
}

.tray {
    display: flex;
    align-items: center;
    justify-content: flex-end;
    gap: 9px;
    padding-right: 20px;
}

.lang {
    margin: 0 8px 0 7px;
}

.clock {
    margin-left: 2px;
    text-align: right;
}

.notify {
    width: 16px;
    height: 16px;
    border-radius: 50%;
    background: #4fb9f7;
    text-align: center;
    font-size: 11px;
    color: #12324a;
}
```
